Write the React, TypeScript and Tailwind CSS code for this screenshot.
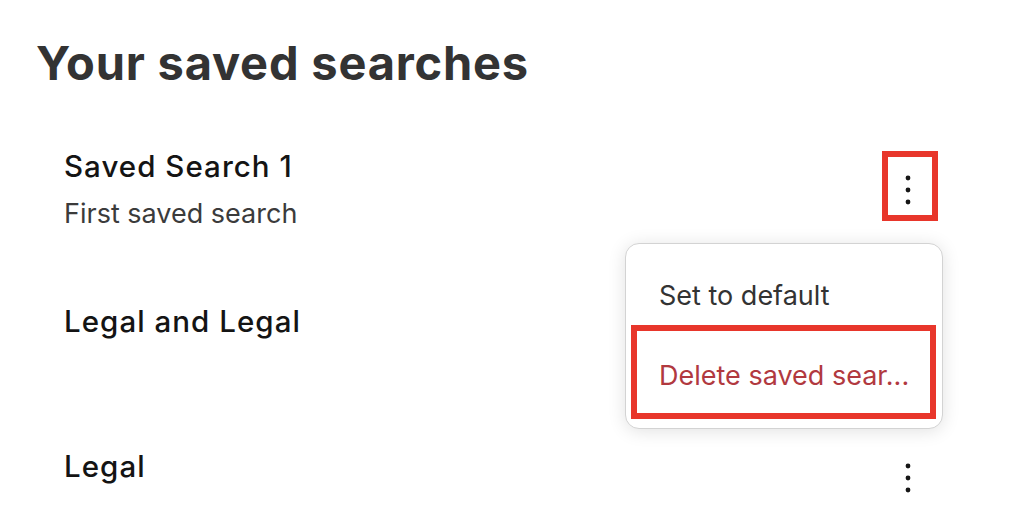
import React from "react";

type SavedSearch = {
  id: number;
  name: string;
  description?: string;
  spacer: string;
  gap: string;
  highlight?: boolean;
};

const searches: SavedSearch[] = [
  { id: 1, name: "Saved Search 1", description: "First saved search", spacer: "", gap: "mt-[62px]", highlight: true },
  { id: 2, name: "Legal and Legal", spacer: "h-[36px]", gap: "mt-[71px]" },
  { id: 3, name: "Legal", spacer: "h-[23px]", gap: "mt-[73px]" },
];

const KebabIcon = () => (
  <svg width="8" height="30" viewBox="0 0 8 30" className="text-[#161616]">
    <circle cx="4" cy="3" r="2.4" fill="currentColor" />
    <circle cx="4" cy="15" r="2.4" fill="currentColor" />
    <circle cx="4" cy="27" r="2.4" fill="currentColor" />
  </svg>
);

const SearchRow = ({ item }: { item: SavedSearch }) => (
  <div className={`flex items-center justify-between ${item.gap}`}>
    <div className="flex flex-col">
      <div className="text-[29.5px] leading-[36px] font-[550] tracking-[0.035em] text-[#141414]">
        {item.name}
      </div>
      {item.description ? (
        <div className="mt-[12px] text-[27px] leading-[36px] text-[#3b3b3b]">{item.description}</div>
      ) : (
        <div className={item.spacer} />
      )}
    </div>

    {/* Row actions */}
    <button className="relative flex h-[44px] w-[56px] items-center justify-center">
      <KebabIcon />
      {item.highlight && (
        <span className="absolute -top-[17px] -bottom-[9px] left-[2px] -right-[2px] border-[6px] border-[#e8362b]" />
      )}
    </button>
  </div>
);

export default function App() {
  return (
    <div className="relative h-[532px] w-[1016px] overflow-hidden bg-white font-['Inter',sans-serif]">
      <h1 className="pl-[36px] pt-[39px] text-[47px] font-bold leading-none tracking-[0.8px] text-[#333333]">
        Your saved searches
      </h1>

      <div className="pl-[64px] pr-[80px]">
        {searches.map((s) => (
          <SearchRow key={s.id} item={s} />
        ))}
      </div>

      {/* Open options menu */}
      <div className="absolute left-[625px] top-[243px] w-[318px] rounded-[14px] border border-[#d3d3d3] bg-white py-3 shadow-[0_2px_18px_rgba(0,0,0,0.12)]">
        <div className="flex h-[80px] items-center pl-[33px] text-[27px] text-[#333333]">Set to default</div>
        <div className="flex h-[80px] items-center whitespace-nowrap pl-[33px] text-[27px] text-[#b1393f]">
          Delete saved sear...
        </div>
        <span className="absolute left-[5px] top-[81px] h-[94px] w-[305px] border-[6px] border-[#e8362b]" />
      </div>
    </div>
  );
}
